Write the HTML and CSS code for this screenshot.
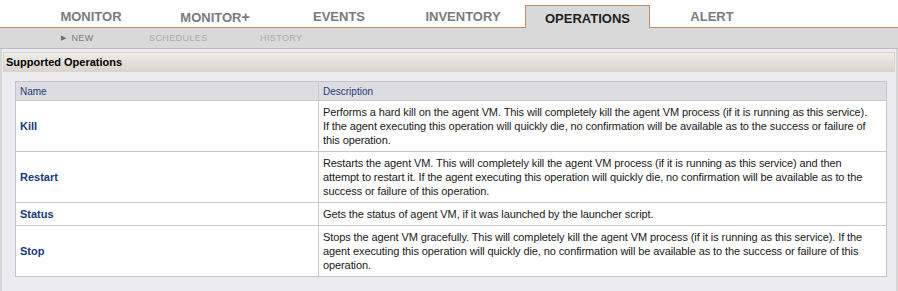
FILE: index.html
```html
<!DOCTYPE html>
<html>
<head>
<meta charset="utf-8">
<link rel="stylesheet" href="styles.css">
</head>
<body>
<div class="tabs">
  <div class="tab">MONITOR</div>
  <div class="tab">MONITOR<span class="plus">+</span></div>
  <div class="tab">EVENTS</div>
  <div class="tab">INVENTORY</div>
  <div class="tab active">OPERATIONS</div>
  <div class="tab">ALERT</div>
</div>
<div class="subnav">
  <div class="sub current"><span class="arrow">&#9654;</span>NEW</div>
  <div class="sub">SCHEDULES</div>
  <div class="sub">HISTORY</div>
</div>
<div class="main">
  <div class="panel-header">Supported Operations</div>
  <table class="ops">
    <thead>
      <tr><th class="c-name">Name</th><th class="c-desc">Description</th></tr>
    </thead>
    <tbody>
      <tr>
        <td class="c-name"><a>Kill</a></td>
        <td class="c-desc">Performs a hard kill on the agent VM. This will completely kill the agent VM process (if it is running as this service). If the agent executing this operation will quickly die, no confirmation will be available as to the success or failure of this operation.</td>
      </tr>
      <tr>
        <td class="c-name"><a>Restart</a></td>
        <td class="c-desc">Restarts the agent VM. This will completely kill the agent VM process (if it is running as this service) and then attempt to restart it. If the agent executing this operation will quickly die, no confirmation will be available as to the success or failure of this operation.</td>
      </tr>
      <tr>
        <td class="c-name"><a>Status</a></td>
        <td class="c-desc">Gets the status of agent VM, if it was launched by the launcher script.</td>
      </tr>
      <tr>
        <td class="c-name"><a>Stop</a></td>
        <td class="c-desc">Stops the agent VM gracefully. This will completely kill the agent VM process (if it is running as this service). If the agent executing this operation will quickly die, no confirmation will be available as to the success or failure of this operation.</td>
      </tr>
    </tbody>
  </table>
</div>
</body>
</html>
```

FILE: styles.css
```css
html, body {
  margin: 0;
  padding: 0;
  background: #ffffff;
  font-family: "Liberation Sans", Arial, sans-serif;
}
body {
  width: 898px;
  height: 291px;
  overflow: hidden;
  display: flex;
  flex-direction: column;
}
.tabs {
  display: flex;
  align-items: flex-end;
  height: 27px;
  padding-left: 29px;
  border-bottom: 1px solid #c98a62;
}
.tab {
  box-sizing: border-box;
  width: 124px;
  height: 22px;
  line-height: 24px;
  text-align: center;
  font-size: 13px;
  font-weight: bold;
  color: #7b7b7b;
}
.tab .plus {
  font-size: 14px;
  font-weight: 900;
}
.tab.active {
  width: 125px;
  height: 23px;
  margin-bottom: -1px;
  background: #d9d9d9;
  border: 1px solid #c98a62;
  border-bottom: none;
  color: #1e1e1e;
  line-height: 25px;
}
.subnav {
  display: flex;
  align-items: center;
  height: 20px;
  background: #d9d9d9;
  border-bottom: 1px solid #bdbdc9;
  padding-left: 61px;
}
.sub {
  font-size: 9px;
  letter-spacing: 0.4px;
  color: #ababab;
  width: 88px;
}
.sub + .sub {
  width: 111px;
}
.sub.current {
  color: #7a7a7a;
}
.arrow {
  font-size: 7px;
  margin-right: 5px;
  color: #6d6d6d;
  position: relative;
  top: -1px;
}
.main {
  flex: 1;
  background: #ebebf0;
  border-left: 2px solid #d6d6d6;
  border-right: 2px solid #d6d6d6;
  padding: 3px 1px 0 1px;
}
.panel-header {
  height: 18px;
  line-height: 18px;
  border: 1px solid #d8d5cf;
  background: linear-gradient(#efede8, #d9d5cc);
  font-size: 11px;
  font-weight: bold;
  color: #000;
  padding-left: 2px;
}
.ops {
  margin: 9px 0 0 12px;
  width: 872px;
  border-collapse: collapse;
  background: #ffffff;
  border: 1px solid #c3c3cc;
  font-size: 11px;
  table-layout: fixed;
}
.ops th {
  background: #dcdce1;
  height: 18px;
  padding: 0 4px;
  text-align: left;
  font-weight: normal;
  font-size: 10px;
  color: #1d3b7c;
}
.ops td {
  padding: 4px 12px 4px 4px;
  line-height: 14px;
  border-top: 1px solid #c9c9c9;
  color: #202020;
  vertical-align: middle;
  letter-spacing: -0.1px;
}
.ops th.c-name,
.ops td.c-name {
  width: 294px;
  padding-right: 4px;
}
.ops .c-desc {
  border-left: 1px solid #c9c9c9;
}
.ops td.c-name a {
  font-weight: bold;
  color: #163a80;
  font-size: 11px;
  letter-spacing: 0;
}
```
